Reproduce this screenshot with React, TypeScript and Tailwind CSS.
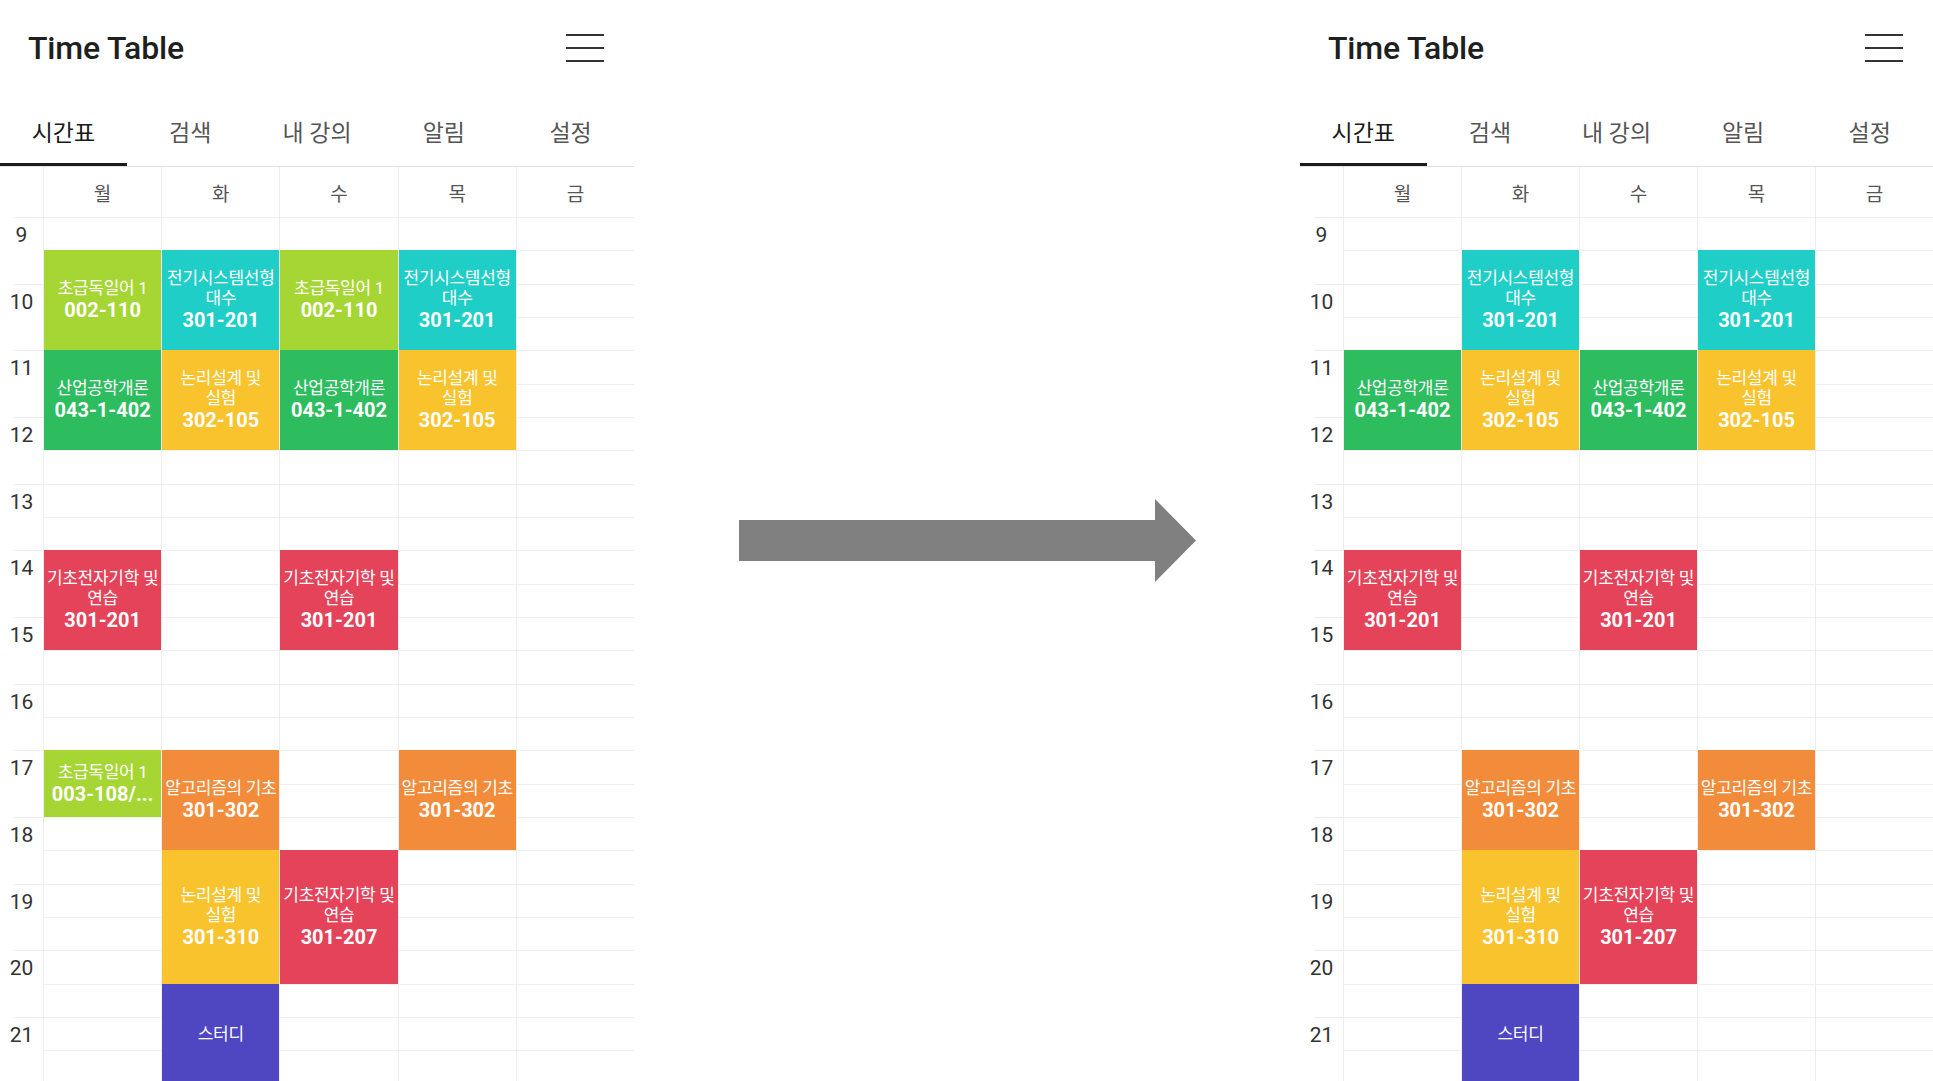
import React from "react";

// one hour of the grid, in px
const HOUR = 200 / 3;
const START = 9;
const HOURS = [9, 10, 11, 12, 13, 14, 15, 16, 17, 18, 19, 20, 21];
const DAYS = ["월", "화", "수", "목", "금"];
const TABS = ["시간표", "검색", "내 강의", "알림", "설정"];

const COLORS = {
  lime: "bg-[#a6d633]",
  green: "bg-[#2dbd5f]",
  cyan: "bg-[#20cec8]",
  yellow: "bg-[#f9c32e]",
  red: "bg-[#e4435a]",
  orange: "bg-[#f28c3b]",
  purple: "bg-[#4e47c1]",
};

interface Lecture {
  day: number;
  start: number;
  end: number;
  lines: string[];
  room?: string;
  color: string;
  german?: boolean;
}

const LECTURES: Lecture[] = [
  { day: 0, start: 9.5, end: 11, lines: ["초급독일어 1"], room: "002-110", color: COLORS.lime, german: true },
  { day: 0, start: 11, end: 12.5, lines: ["산업공학개론"], room: "043-1-402", color: COLORS.green },
  { day: 0, start: 14, end: 15.5, lines: ["기초전자기학 및", "연습"], room: "301-201", color: COLORS.red },
  { day: 0, start: 17, end: 18, lines: ["초급독일어 1"], room: "003-108/...", color: COLORS.lime, german: true },

  { day: 1, start: 9.5, end: 11, lines: ["전기시스템선형", "대수"], room: "301-201", color: COLORS.cyan },
  { day: 1, start: 11, end: 12.5, lines: ["논리설계 및", "실험"], room: "302-105", color: COLORS.yellow },
  { day: 1, start: 17, end: 18.5, lines: ["알고리즘의 기초"], room: "301-302", color: COLORS.orange },
  { day: 1, start: 18.5, end: 20.5, lines: ["논리설계 및", "실험"], room: "301-310", color: COLORS.yellow },
  { day: 1, start: 20.5, end: 22, lines: ["스터디"], color: COLORS.purple },

  { day: 2, start: 9.5, end: 11, lines: ["초급독일어 1"], room: "002-110", color: COLORS.lime, german: true },
  { day: 2, start: 11, end: 12.5, lines: ["산업공학개론"], room: "043-1-402", color: COLORS.green },
  { day: 2, start: 14, end: 15.5, lines: ["기초전자기학 및", "연습"], room: "301-201", color: COLORS.red },
  { day: 2, start: 18.5, end: 20.5, lines: ["기초전자기학 및", "연습"], room: "301-207", color: COLORS.red },

  { day: 3, start: 9.5, end: 11, lines: ["전기시스템선형", "대수"], room: "301-201", color: COLORS.cyan },
  { day: 3, start: 11, end: 12.5, lines: ["논리설계 및", "실험"], room: "302-105", color: COLORS.yellow },
  { day: 3, start: 17, end: 18.5, lines: ["알고리즘의 기초"], room: "301-302", color: COLORS.orange },
];

function LectureBlock({ lecture }: { lecture: Lecture }) {
  return (
    <div
      className={`flex shrink-0 flex-col items-center justify-center overflow-hidden text-center text-white ${lecture.color}`}
      style={{ height: (lecture.end - lecture.start) * HOUR }}
    >
      {lecture.lines.map((line) => (
        <span key={line} className="whitespace-nowrap text-[17px] leading-[20px] tracking-[-0.3px]">
          {line}
        </span>
      ))}
      {lecture.room && (
        <span className="whitespace-nowrap text-[20px] font-bold leading-[24px]">{lecture.room}</span>
      )}
    </div>
  );
}

function DayColumn({ lectures }: { lectures: Lecture[] }) {
  const sorted = [...lectures].sort((a, b) => a.start - b.start);
  let t = START;
  const parts: React.ReactNode[] = [];
  sorted.forEach((l, i) => {
    if (l.start > t) {
      parts.push(<div key={`gap-${i}`} className="shrink-0" style={{ height: (l.start - t) * HOUR }} />);
    }
    parts.push(<LectureBlock key={`lec-${i}`} lecture={l} />);
    t = l.end;
  });
  return (
    <div className="flex min-w-0 flex-col border-l border-[#eeeeee] bg-[image:repeating-linear-gradient(to_bottom,#f0f0f0_0px,#f0f0f0_1px,transparent_1px,transparent_33.3333px)]">
      {parts}
    </div>
  );
}

function Panel({ lectures, widthClass }: { lectures: Lecture[]; widthClass: string }) {
  return (
    <div className={`flex h-full shrink-0 flex-col overflow-hidden bg-white ${widthClass}`}>
      <header className="flex h-[96px] shrink-0 items-center justify-between pl-[28px] pr-[30px]">
        <h1 className="text-[32px] font-medium tracking-[-0.2px] text-[#1f1f1f]">Time Table</h1>
        <svg width="38" height="28" viewBox="0 0 38 28" fill="none" stroke="#333333" strokeWidth="2">
          <line x1="0" y1="1" x2="38" y2="1" />
          <line x1="0" y1="14" x2="38" y2="14" />
          <line x1="0" y1="27" x2="38" y2="27" />
        </svg>
      </header>

      <nav className="flex h-[71px] shrink-0 border-b border-[#e2e2e2]">
        {TABS.map((tab, i) => (
          <div
            key={tab}
            className={`flex flex-1 items-center justify-center border-b-[3px] pt-[9px] text-[23px] ${
              i === 0 ? "border-[#1c1c1c] text-[#1a1a1a]" : "border-transparent text-[#555555]"
            }`}
          >
            {tab}
          </div>
        ))}
      </nav>

      <div className="grid h-[50px] shrink-0 grid-cols-[43px_repeat(5,minmax(0,1fr))]">
        <div />
        {DAYS.map((d) => (
          <div
            key={d}
            className="flex items-center justify-center border-l border-[#eeeeee] pt-[6px] text-[19px] text-[#555555]"
          >
            {d}
          </div>
        ))}
      </div>

      <div className="grid min-h-0 flex-1 grid-cols-[43px_repeat(5,minmax(0,1fr))] overflow-hidden">
        <div className="flex flex-col">
          {HOURS.map((h) => (
            <div key={h} className="h-[66.6667px] shrink-0">
              <div className="ml-[14px] h-px bg-[#ececec]" />
              <div className="mt-[5px] text-center text-[21px] leading-[24px] text-[#333333]">{h}</div>
            </div>
          ))}
        </div>
        {DAYS.map((d, i) => (
          <DayColumn key={d} lectures={lectures.filter((l) => l.day === i)} />
        ))}
      </div>
    </div>
  );
}

export default function App() {
  const after = LECTURES.filter((l) => !l.german);
  return (
    <div className="flex h-[1081px] w-full overflow-hidden bg-white font-['Roboto','Noto_Sans_CJK_KR',sans-serif]">
      <Panel lectures={LECTURES} widthClass="w-[634px]" />
      <div className="flex flex-1 items-center justify-center">
        <svg width="457" height="83" viewBox="0 0 457 83">
          <rect x="0" y="21" width="417" height="41" fill="#808080" />
          <polygon points="416,0 457,41.5 416,83" fill="#808080" />
        </svg>
      </div>
      <Panel lectures={after} widthClass="w-[633px]" />
    </div>
  );
}
